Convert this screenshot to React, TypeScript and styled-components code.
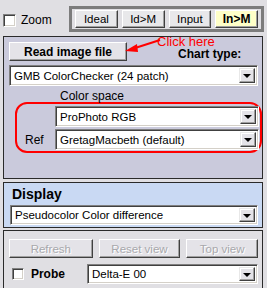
import styled, { createGlobalStyle } from "styled-components";

const GlobalStyle = createGlobalStyle`
  html, body {
    margin: 0;
    padding: 0;
    background: #e0dfe3;
    font-family: "Liberation Sans", Arial, sans-serif;
    font-size: 11px;
    color: #000;
  }
`;

const Page = styled.div`
  width: 267px;
  height: 288px;
  overflow: hidden;
  background: #e0dfe3;
`;

const TopRow = styled.div`
  height: 36px;
  display: flex;
  align-items: flex-start;
`;

const ZoomLabel = styled.label`
  display: flex;
  align-items: center;
  gap: 5px;
  margin: 13px 0 0 3px;
  width: 66px;
  font-size: 12px;
`;

const CheckBox = styled.span<{ $size: number }>`
  display: inline-block;
  box-sizing: border-box;
  width: ${(p) => p.$size}px;
  height: ${(p) => p.$size}px;
  background: #fff;
  border-top: 1px solid #808080;
  border-left: 1px solid #808080;
  border-right: 1px solid #fff;
  border-bottom: 1px solid #fff;
  box-shadow: inset 1px 1px 0 #404040, inset -1px -1px 0 #d4d0c8;
`;

const ModeGroup = styled.div`
  margin-top: 6px;
  box-sizing: border-box;
  width: 195px;
  height: 26px;
  border: 3px solid #7c7c7c;
  padding: 1px 3px;
  display: flex;
  gap: 4px;
  background: #e0dfe3;
`;

const ModeButton = styled.div<{ $active?: boolean }>`
  box-sizing: border-box;
  width: 43px;
  height: 18px;
  display: flex;
  align-items: center;
  justify-content: center;
  font-size: ${(p) => (p.$active ? "12px" : "11.5px")};
  font-weight: ${(p) => (p.$active ? "bold" : "normal")};
  background: ${(p) => (p.$active ? "#ffffc8" : "#e8e8ea")};
  border-top: 1px solid #fff;
  border-left: 1px solid #fff;
  border-right: 1px solid #404040;
  border-bottom: 1px solid #404040;
  box-shadow: inset -1px -1px 0 #a0a0a0;
`;

const Panel = styled.div<{ $bg: string }>`
  position: relative;
  box-sizing: border-box;
  width: 260px;
  margin-left: 3px;
  background: ${(p) => p.$bg};
  border: 1px solid #2a2a2a;
`;

const ChartPanel = styled(Panel)`
  padding: 5px 4px 25px 5px;
  margin-bottom: 3px;
`;

const DisplayPanel = styled(Panel)`
  padding: 3px 4px 2px 6px;
  margin-bottom: 2px;
`;

const ViewPanel = styled(Panel)`
  height: 70px;
  padding: 8px 4px 0 5px;
`;

const HeaderRow = styled.div`
  display: flex;
  align-items: flex-end;
  height: 19px;
`;

const PushButton = styled.div<{ $width: number; $disabled?: boolean }>`
  box-sizing: border-box;
  width: ${(p) => p.$width}px;
  height: 19px;
  display: flex;
  align-items: center;
  justify-content: center;
  background: #e4e3e8;
  font-size: ${(p) => (p.$disabled ? "11.5px" : "12px")};
  font-weight: ${(p) => (p.$disabled ? "normal" : "bold")};
  color: ${(p) => (p.$disabled ? "#a8a8ac" : "#000")};
  text-shadow: ${(p) => (p.$disabled ? "1px 1px 0 #fff" : "none")};
  border-top: 1px solid #fff;
  border-left: 1px solid #fff;
  border-right: 1px solid #404040;
  border-bottom: 1px solid #404040;
  box-shadow: inset -1px -1px 0 #a0a0a0;
`;

const BoldLabel = styled.span`
  font-size: 12px;
  font-weight: bold;
  line-height: 14px;
`;

const ChartTypeLabel = styled(BoldLabel)`
  margin-left: 51px;
  margin-bottom: 0;
`;

const Combo = styled.div<{ $width: number; $height?: number }>`
  box-sizing: border-box;
  width: ${(p) => p.$width}px;
  height: ${(p) => p.$height ?? 21}px;
  display: flex;
  align-items: stretch;
  background: #fff;
  border-top: 1px solid #808080;
  border-left: 1px solid #808080;
  border-right: 1px solid #fff;
  border-bottom: 1px solid #fff;
  box-shadow: inset 1px 1px 0 #404040, inset -1px -1px 0 #d4d0c8;
  padding: 2px;
`;

const ComboText = styled.span`
  flex: 1;
  display: flex;
  align-items: center;
  padding-left: 2px;
  font-size: 11.5px;
  white-space: nowrap;
  overflow: hidden;
`;

const ComboArrow = styled.span`
  box-sizing: border-box;
  width: 16px;
  display: flex;
  align-items: center;
  justify-content: center;
  background: #e4e3e8;
  border-top: 1px solid #e8e8e8;
  border-left: 1px solid #e8e8e8;
  border-right: 1px solid #404040;
  border-bottom: 1px solid #404040;
  box-shadow: inset -1px -1px 0 #a0a0a0, inset 1px 1px 0 #fff;

  &::after {
    content: "";
    border-left: 4px solid transparent;
    border-right: 4px solid transparent;
    border-top: 4px solid #000;
    margin-top: 1px;
  }
`;

const ChartCombo = styled(Combo)`
  margin-top: 4px;
`;

const ColorSpaceLabel = styled.div`
  margin: 4px 0 0 51px;
  line-height: 12px;
  font-size: 12px;
`;

const RedBox = styled.div`
  box-sizing: border-box;
  margin-left: 6px;
  width: 247px;
  border: 2px solid #ff0000;
  border-radius: 12px;
  padding: 2px 1px 1px 0;
  display: grid;
  grid-template-columns: 38px 1fr;
  row-gap: 2px;
  align-items: center;
`;

const RefLabel = styled.span`
  padding-left: 8px;
  font-size: 12px;
`;

const DisplayTitle = styled.div`
  font-size: 14px;
  font-weight: bold;
  line-height: 16px;
  margin-left: 2px;
  margin-bottom: 3px;
`;

const ButtonRow = styled.div`
  display: flex;
  gap: 6px;
`;

const ProbeRow = styled.div`
  margin-top: 6px;
  display: flex;
  align-items: center;
`;

const ProbeSpacer = styled.span`
  width: 3px;
`;

const ProbeLabel = styled(BoldLabel)`
  margin: 0 22px 0 7px;
`;

const Annotation = styled.svg`
  position: absolute;
  left: 112px;
  top: 0;
  overflow: visible;
`;

const ClickHere = styled.span`
  position: absolute;
  left: 153px;
  top: -3px;
  color: #ff0000;
  font-size: 13px;
  line-height: 15px;
`;

function DropDown({ text, width, height }: { text: string; width: number; height?: number }) {
  return (
    <Combo $width={width} $height={height}>
      <ComboText>{text}</ComboText>
      <ComboArrow />
    </Combo>
  );
}

export default function App() {
  return (
    <Page>
      <GlobalStyle />
      <TopRow>
        <ZoomLabel>
          <CheckBox $size={13} />
          Zoom
        </ZoomLabel>
        <ModeGroup>
          <ModeButton>Ideal</ModeButton>
          <ModeButton>Id&gt;M</ModeButton>
          <ModeButton>Input</ModeButton>
          <ModeButton $active>In&gt;M</ModeButton>
        </ModeGroup>
      </TopRow>

      <ChartPanel $bg="#cacadc">
        <HeaderRow>
          <PushButton $width={118}>Read image file</PushButton>
          <ChartTypeLabel>Chart type:</ChartTypeLabel>
        </HeaderRow>
        <ChartCombo $width={249}>
          <ComboText>GMB ColorChecker (24 patch)</ComboText>
          <ComboArrow />
        </ChartCombo>
        <ColorSpaceLabel>Color space</ColorSpaceLabel>
        <RedBox>
          <span />
          <DropDown text="ProPhoto RGB" width={204} />
          <RefLabel>Ref</RefLabel>
          <DropDown text="GretagMacbeth (default)" width={204} />
        </RedBox>
        <Annotation width="50" height="20">
          <line x1="44" y1="3" x2="16" y2="12" stroke="#ff0000" strokeWidth="2" />
          <polygon points="9,14 21,7 22,15" fill="#ff0000" />
        </Annotation>
        <ClickHere>Click here</ClickHere>
      </ChartPanel>

      <DisplayPanel $bg="#c9d9f3">
        <DisplayTitle>Display</DisplayTitle>
        <DropDown text="Pseudocolor Color difference" width={248} height={20} />
      </DisplayPanel>

      <ViewPanel $bg="#e0dfe3">
        <ButtonRow>
          <PushButton $width={84} $disabled>Refresh</PushButton>
          <PushButton $width={82} $disabled>Reset view</PushButton>
          <PushButton $width={72} $disabled>Top view</PushButton>
        </ButtonRow>
        <ProbeRow>
          <ProbeSpacer />
          <CheckBox $size={12} />
          <ProbeLabel>Probe</ProbeLabel>
          <DropDown text="Delta-E 00" width={172} height={20} />
        </ProbeRow>
      </ViewPanel>
    </Page>
  );
}
